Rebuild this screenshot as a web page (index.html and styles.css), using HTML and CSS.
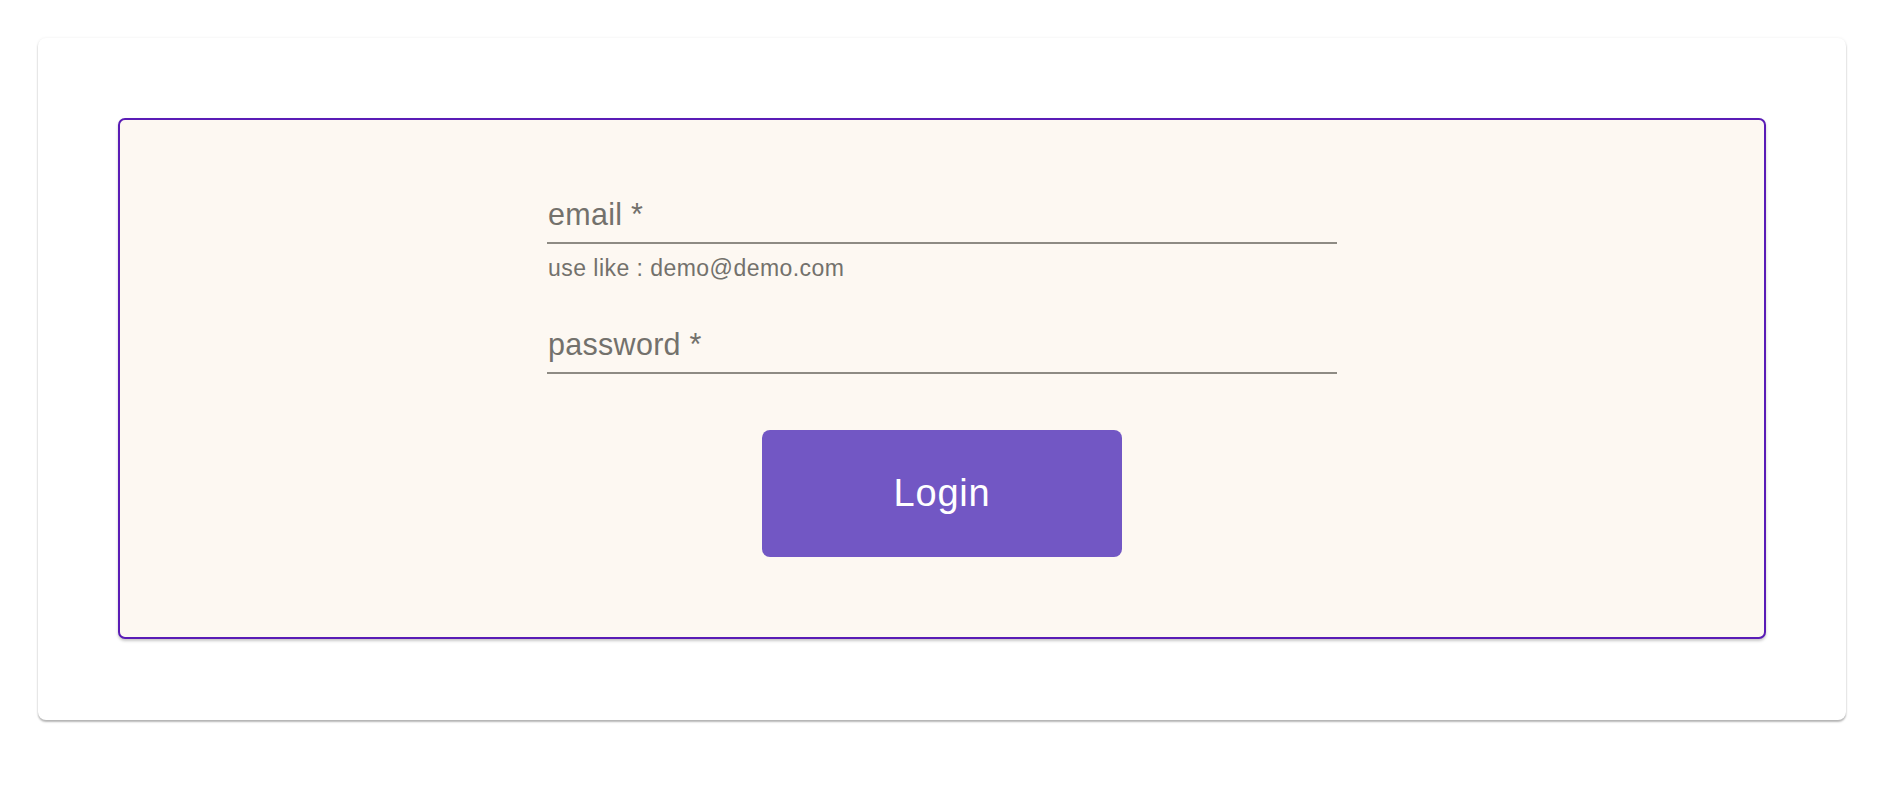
FILE: index.html
```html
<!DOCTYPE html>
<html lang="en">
<head>
<meta charset="utf-8">
<title>Login</title>
<link rel="stylesheet" href="styles.css">
</head>
<body>
<div class="card">
  <form class="login-box">
    <div class="field">
      <label class="field-label">email *</label>
    </div>
    <p class="helper">use like : demo@demo.com</p>
    <div class="field field-password">
      <label class="field-label">password *</label>
    </div>
    <button type="button" class="login-btn">Login</button>
  </form>
</div>
</body>
</html>
```

FILE: styles.css
```css
html, body {
  margin: 0;
  padding: 0;
  background: #ffffff;
}

body {
  font-family: "Liberation Sans", Arial, Helvetica, sans-serif;
  padding: 38px;
}

.card {
  background: #ffffff;
  border-radius: 8px;
  padding: 80px 80px 81px;
  box-shadow: 0 2px 2px rgba(0, 0, 0, 0.28), 0 0 3px rgba(0, 0, 0, 0.07);
}

.login-box {
  background: #fdf8f2;
  border: 2px solid #5a1cb6;
  border-radius: 7px;
  box-shadow: 0 2px 3px rgba(0, 0, 0, 0.22);
  padding: 76px 0 80px;
  display: flex;
  flex-direction: column;
  align-items: center;
  margin: 0;
}

.field {
  width: 790px;
  padding-bottom: 10px;
  border-bottom: 2px solid #8e8b84;
}

.field-label {
  display: block;
  padding-left: 1px;
  font-size: 30.5px;
  line-height: 36px;
  letter-spacing: 0.00938em;
  color: #73716c;
}

.helper {
  width: 790px;
  margin: 9px 0 0;
  padding-left: 1px;
  box-sizing: border-box;
  font-size: 23px;
  line-height: 30px;
  letter-spacing: 0.02em;
  color: #73716c;
}

.field-password {
  margin-top: 43px;
}

.login-btn {
  margin-top: 56px;
  width: 360px;
  height: 127px;
  border: none;
  border-radius: 8px;
  background: #7257c4;
  color: #ffffff;
  font-family: "Liberation Sans", Arial, Helvetica, sans-serif;
  font-size: 38px;
  letter-spacing: 0.02em;
  cursor: pointer;
}
```
